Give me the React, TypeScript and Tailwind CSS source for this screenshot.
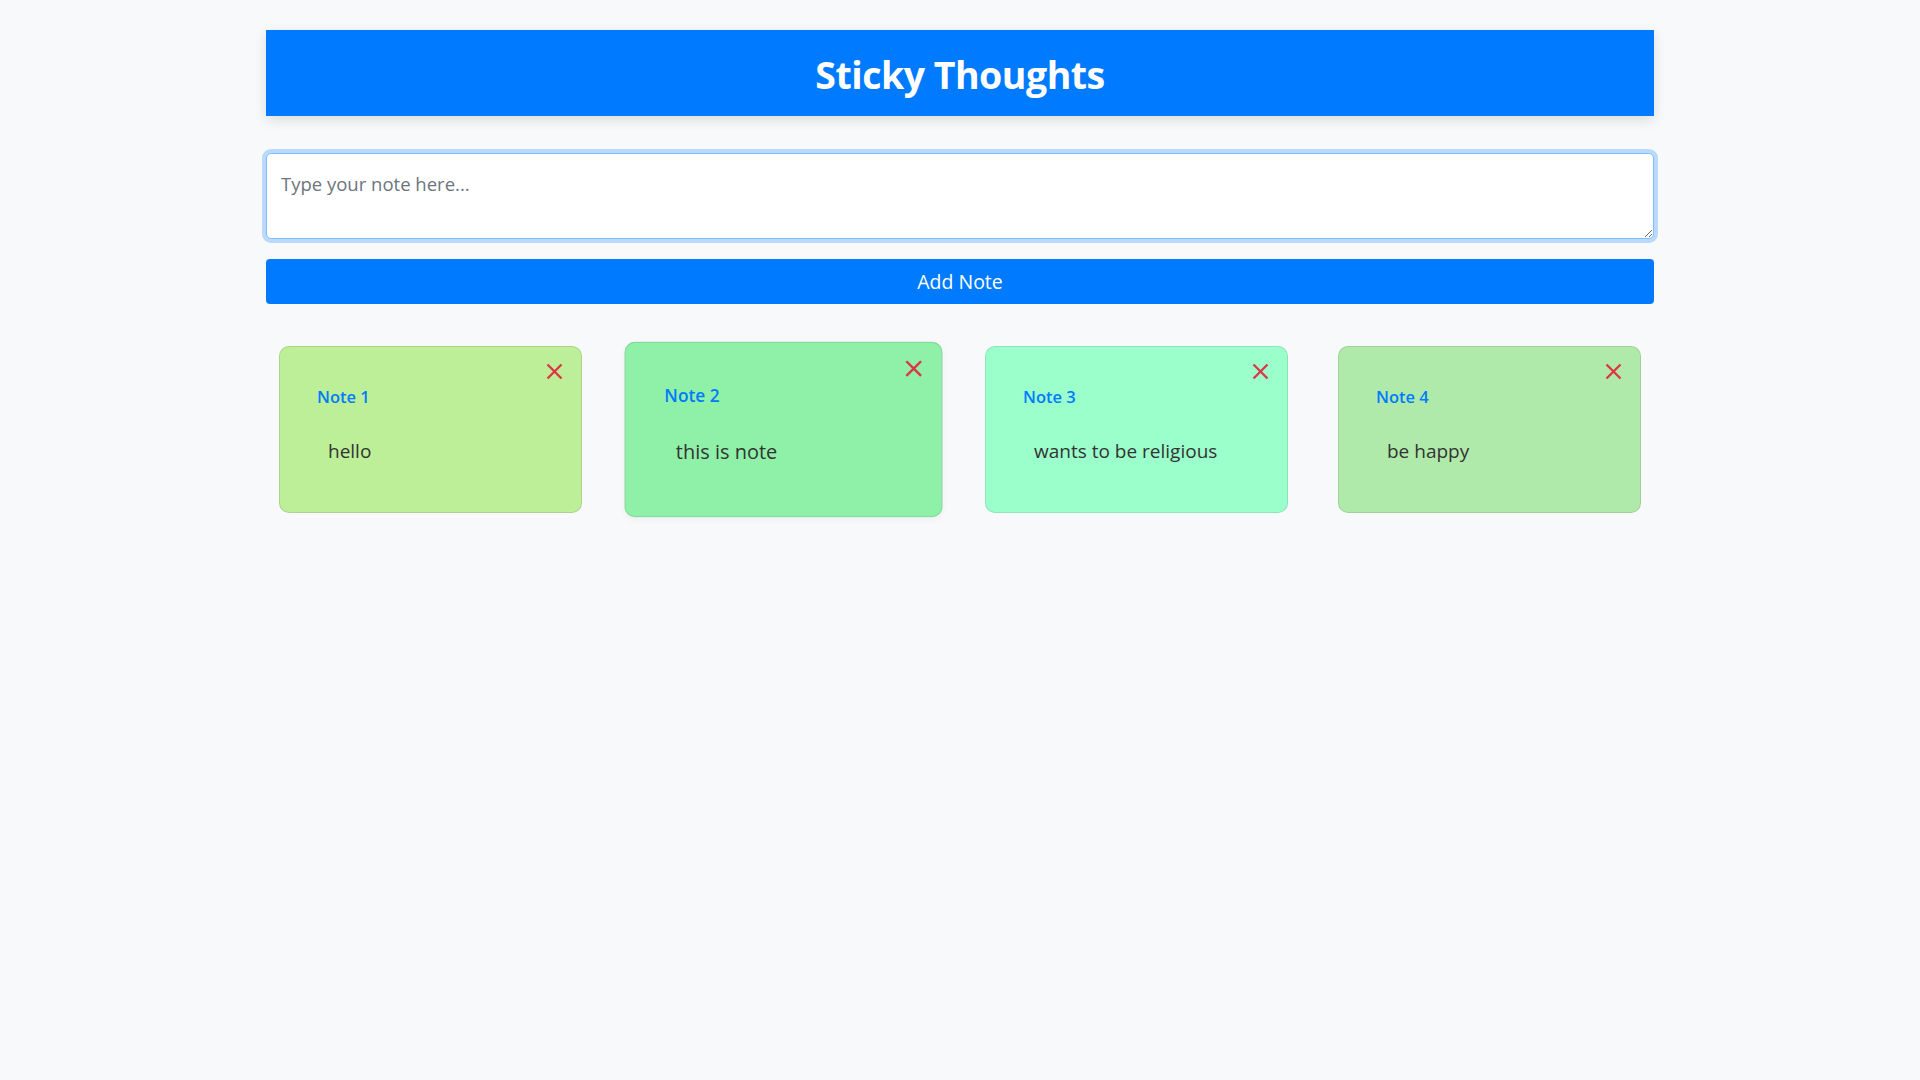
import React from 'react'

type Note = { id: number; text: string; color: string; lifted?: boolean }

const notes: Note[] = [
  { id: 1, text: 'hello', color: 'bg-[#bdee98]' },
  { id: 2, text: 'this is note', color: 'bg-[#8ff0a8]', lifted: true },
  { id: 3, text: 'wants to be religious', color: 'bg-[#9bffcc]' },
  { id: 4, text: 'be happy', color: 'bg-[#b0eaaa]' },
]

const CloseIcon: React.FC = () => (
  <svg width="17" height="17" viewBox="0 0 17 17" fill="none" stroke="#dc3545" strokeWidth="2.3">
    <line x1="1.5" y1="1.5" x2="15.5" y2="15.5" />
    <line x1="15.5" y1="1.5" x2="1.5" y2="15.5" />
  </svg>
)

const NoteCard: React.FC<{ note: Note }> = ({ note }) => (
  <div
    className={`relative w-[303px] h-[167px] rounded-[10px] border border-black/10 ${note.color} ${
      note.lifted ? 'scale-[1.05] shadow-[0_2px_6px_rgba(0,0,0,0.04)]' : ''
    }`}
  >
    <button className="absolute right-[18px] top-[16px] p-0 bg-transparent">
      <CloseIcon />
    </button>
    <div className="pt-[40px] pl-[37px]">
      <h3 className="text-[16.5px] leading-[20px] font-semibold text-[#007bff]">Note {note.id}</h3>
      <p className="mt-[32px] pl-[11px] text-[19px] leading-[24px] text-[#333]">{note.text}</p>
    </div>
  </div>
)

export default function App() {
  return (
    <div className="min-h-screen bg-[#f8f9fa] font-['Open_Sans',sans-serif]">
      <div className="w-[1388px] mx-auto pt-[30px]">
        {/* Header */}
        <header className="h-[86px] flex items-center justify-center pt-[4px] bg-[#007bff] shadow-[0_4px_12px_rgba(0,0,0,0.12)]">
          <h1 className="text-[37.5px] font-bold text-white leading-none tracking-[-0.5px]">Sticky Thoughts</h1>
        </header>

        {/* Input */}
        <textarea
          placeholder="Type your note here..."
          className="block w-full h-[86px] mt-[37px] px-[14px] pt-[16px] text-[18.5px] leading-[27px] bg-white border border-[#80bdff] rounded-[5px] outline-none shadow-[0_0_0_4px_rgba(0,123,255,0.25)] placeholder:text-[#6c757d]"
        />
        <button className="block w-full h-[45px] mt-[20px] rounded-[4px] bg-[#007bff] text-white text-[19.5px]">
          Add Note
        </button>

        {/* Notes */}
        <div className="flex justify-between px-[13px] mt-[42px]">
          {notes.map((n) => (
            <NoteCard key={n.id} note={n} />
          ))}
        </div>
      </div>
    </div>
  )
}
